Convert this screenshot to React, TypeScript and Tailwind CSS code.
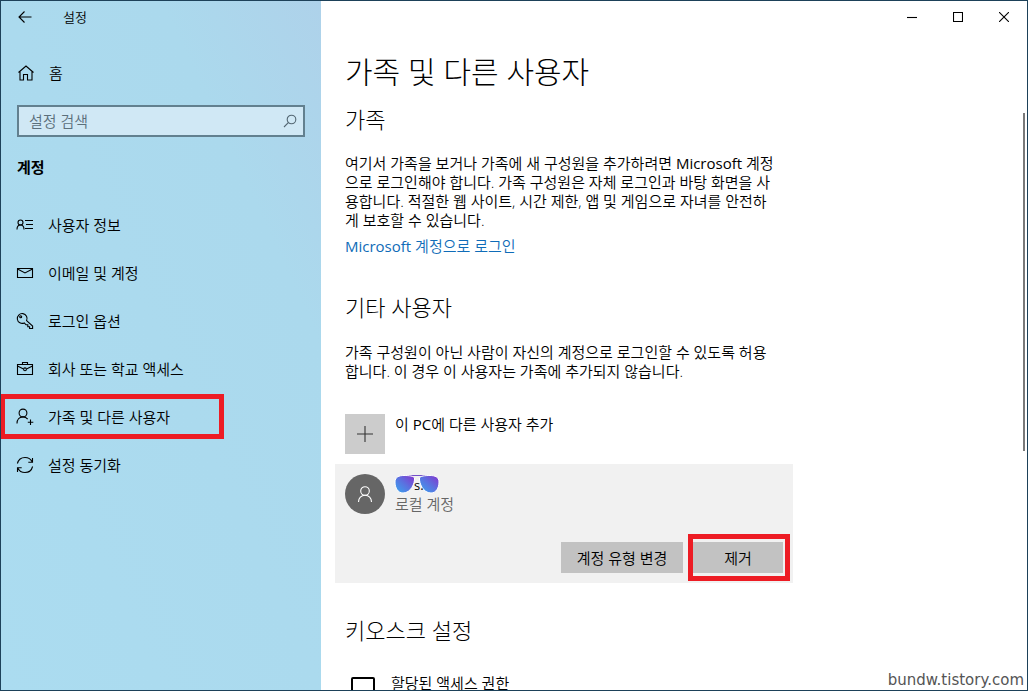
import type { ReactNode } from "react";

function Icon({ children, className = "size-[18px]", box = 18 }: { children: ReactNode; className?: string; box?: number }) {
  return (
    <svg
      viewBox={`0 0 ${box} ${box}`}
      className={`${className} shrink-0`}
      fill="none"
      stroke="currentColor"
      strokeWidth="1.1"
      aria-hidden="true"
    >
      {children}
    </svg>
  );
}

const navItems = [
  {
    label: "사용자 정보",
    icon: (
      <>
        <circle cx="4.5" cy="6.5" r="2.5" />
        <path d="M1 13.5C1 10.8 2.5 9 4.5 9S8 10.8 8 13.5M9 4.5h8M10 8.5h7M9 12.5h8" />
      </>
    ),
  },
  {
    label: "이메일 및 계정",
    icon: <path d="M1.5 4.5h15v9h-15zM1.5 5l7.5 4 7.5-4" />,
  },
  {
    label: "로그인 옵션",
    icon: (
      <>
        <path d="M10.6 8.6l6 5.4v2.5h-3v-1.8h-1.8v-1.9H10l-1.7-1.9A4.9 4.9 0 1 1 10.6 8.6z" />
        <circle cx="4.7" cy="4.8" r="1" />
      </>
    ),
  },
  {
    label: "회사 또는 학교 액세스",
    icon: (
      <>
        <path d="M1.5 4.5h15v10h-15zM6.5 4.5v-2h5v2M1.5 6l6 3M16.5 6l-6 3" />
        <circle cx="9" cy="9.3" r="1.4" />
      </>
    ),
  },
  {
    label: "가족 및 다른 사용자",
    active: true,
    icon: (
      <>
        <circle cx="7" cy="5" r="3.9" />
        <path d="M1 15.5c0-3.9 2.5-6.6 6-6.6 2 0 3.6.8 4.7 2.3M14.5 11.5V17M11.8 14.3h5.5" />
      </>
    ),
  },
  {
    label: "설정 동기화",
    icon: (
      <path d="M1.4 7.5C2.3 4 5.2 1.5 9 1.5c3.2 0 6 1.8 7.3 4.6M16.5 2v4.3h-4.2M16.6 10.5c-.9 3.5-3.8 6-7.6 6-3.2 0-6-1.8-7.3-4.6M1.5 16v-4.3h4.2" />
    ),
  },
];

function Sidebar() {
  return (
    <aside className="w-80 shrink-0 bg-linear-to-bl from-[#aed2ea] via-[#abd9ed] via-25% to-[#abdcf0]">
      <div className="flex h-8 items-center">
        <button aria-label="뒤로" className="flex w-12 justify-center">
          <Icon className="size-4" box={16}>
            <path d="M2 8h12.5M7.5 2.5L2 8l5.5 5.5" />
          </Icon>
        </button>
        <span className="ml-3.5 text-[13px]">설정</span>
      </div>

      <a href="#home" className="mt-4 flex h-12 items-center gap-3.5 pl-4">
        <Icon>
          <path d="M1.5 8.5L9 2l7.5 6.5M3 7.5V16h3.5v-5.5h4V16H15V7.5" />
        </Icon>
        홈
      </a>

      <label className="mx-4 mt-2 flex h-8 items-center border-2 border-[#62808f] bg-[#d0e8f5] pr-1.5 pl-2.5 text-[#536672]">
        <input
          type="text"
          aria-label="설정 검색"
          placeholder="설정 검색"
          className="min-w-0 flex-1 bg-transparent outline-none placeholder:text-[#5b6f7b]"
        />
        <Icon className="size-3.5" box={14}>
          <circle cx="8.5" cy="5.5" r="4.3" />
          <path d="M5.3 8.7L1 13" />
        </Icon>
      </label>

      <h2 className="mt-1.5 flex h-12 items-center pl-4 font-bold">계정</h2>

      <nav className="mt-2.5">
        {navItems.map((item) => (
          <a key={item.label} href="#accounts" className="relative flex h-12 items-center gap-3.5 pl-[15px]">
            <Icon>{item.icon}</Icon>
            {item.label}
            {item.active && (
              <>
                <span className="absolute left-0 h-6 w-1 bg-[#1f6fb5]" />
                <span className="absolute top-px -left-px h-[45px] w-56 border-5 border-[#ed1c24]" />
              </>
            )}
          </a>
        ))}
      </nav>
    </aside>
  );
}

function WindowButtons() {
  const buttons = [
    { label: "최소화", path: "M0 5.5h10" },
    { label: "최대화", path: "M.5.5h9v9h-9z" },
    { label: "닫기", path: "M0 0l10 10M10 0L0 10" },
  ];
  return (
    <div className="flex h-8 justify-end">
      {buttons.map((b) => (
        <button key={b.label} aria-label={b.label} className="flex w-[46px] items-center justify-center">
          <Icon className="size-2.5" box={10}>
            <path d={b.path} />
          </Icon>
        </button>
      ))}
    </div>
  );
}

function Sunglasses() {
  return (
    <svg viewBox="0 0 46 20" className="absolute top-0 -left-px h-5 w-[46px]" aria-hidden="true">
      <defs>
        <linearGradient id="lens" x1="1" y1="0" x2="0" y2="1">
          <stop offset="0.1" stopColor="#7d3fd0" />
          <stop offset="0.5" stopColor="#5a72e0" />
          <stop offset="1" stopColor="#38a8f0" />
        </linearGradient>
      </defs>
      <path d="M14 1.5h18" stroke="#7450c8" fill="none" />
      <g stroke="#fff" fill="url(#lens)">
        <path d="M1 8C1 3 5 1.5 10 1.500S20 2 20.500 4C21 9 17 19 9 19 4 19 1 14 1 8z" />
        <path d="M45 8c0-5-4-6.500-9-6.500S26 2 25.500 4C25 9 29 19 37 19c5 0 8-5 8-11z" />
      </g>
    </svg>
  );
}

function AccountCard() {
  return (
    <section className="mt-2.5 -ml-2.5 w-[458px] bg-[#f1f1f1] p-2.5">
      <div className="flex gap-2.5">
        <div className="flex size-10 items-center justify-center rounded-full bg-[#666] text-white">
          <Icon>
            <circle cx="9" cy="6" r="4.3" />
            <path d="M2.5 17c0-3.9 2.7-6.7 6.5-6.7s6.5 2.8 6.5 6.7" />
          </Icon>
        </div>
        <div>
          <div className="relative h-5 pl-[19px]">
            <Sunglasses />
            <span className="relative text-[13px] font-normal">s.</span>
          </div>
          <div className="text-[#666]">로컬 계정</div>
        </div>
      </div>
      <div className="mt-7 flex justify-end gap-2.5">
        <button className="h-[31px] w-[122px] bg-[#c2c2c2]">계정 유형 변경</button>
        <div className="relative">
          <button className="h-[31px] w-[90px] bg-[#c2c2c2]">제거</button>
          <span className="pointer-events-none absolute -inset-y-2 -right-[7px] -left-[5px] border-5 border-[#ed1c24]" />
        </div>
      </div>
    </section>
  );
}

export default function App() {
  return (
    <div className="relative h-screen overflow-hidden bg-[#1d4159] p-px font-['Open_Sans','Noto_Sans_CJK_KR',sans-serif] text-[15px] leading-5 font-[350] text-black">
      <div className="flex h-full overflow-hidden bg-white">
        <Sidebar />
        <div className="min-w-0 flex-1">
          <WindowButtons />
          <main className="pt-[19px] pl-6 whitespace-nowrap">
            <h1 className="text-[30px] leading-10 font-light">가족 및 다른 사용자</h1>

            <h2 className="mt-[13px] text-[22px] leading-7 font-light">가족</h2>
            <p className="mt-[21px] leading-[19px]">
              여기서 가족을 보거나 가족에 새 구성원을 추가하려면 <span className="font-normal">Microsoft</span> 계정
              <br />
              으로 로그인해야 합니다. 가족 구성원은 자체 로그인과 바탕 화면을 사
              <br />
              용합니다. 적절한 웹 사이트, 시간 제한, 앱 및 게임으로 자녀를 안전하
              <br />
              게 보호할 수 있습니다.
            </p>
            <a href="#signin" className="mt-1.5 block text-[#0f6cb8]">
              <span className="font-normal">Microsoft</span> 계정으로 로그인
            </a>

            <h2 className="mt-[37px] text-[22px] leading-7 font-light">기타 사용자</h2>
            <p className="mt-[22px] leading-[19px]">
              가족 구성원이 아닌 사람이 자신의 계정으로 로그인할 수 있도록 허용
              <br />
              합니다. 이 경우 이 사용자는 가족에 추가되지 않습니다.
            </p>

            <button className="mt-[33px] flex gap-2.5">
              <span className="flex size-10 items-center justify-center bg-[#ccc] text-[#333]">
                <Icon className="size-4" box={16}>
                  <path d="M8 0v16M0 8h16" />
                </Icon>
              </span>
              <span>
                이 <span className="font-normal">PC</span>에 다른 사용자 추가
              </span>
            </button>
            <AccountCard />

            <h2 className="mt-[33px] text-[22px] leading-7 font-light">키오스크 설정</h2>
            <button className="mt-[29px] flex gap-4 pl-1.5">
              <svg viewBox="0 0 24 20" className="mt-1 h-5 w-6" fill="none" stroke="black" strokeWidth="2" aria-hidden="true">
                <path d="M1 19V2q0-1 1-1h20q1 0 1 1v17z" />
              </svg>
              할당된 액세스 권한
            </button>
          </main>
        </div>
      </div>
      <div className="absolute top-[113px] right-[3px] h-[338px] w-0.5 bg-[#7a7a7a]" />
      <div className="absolute right-1 bottom-px font-['DejaVu_Sans',sans-serif] text-[15px] font-normal text-[#555]">
        bundw.tistory.com
      </div>
    </div>
  );
}
